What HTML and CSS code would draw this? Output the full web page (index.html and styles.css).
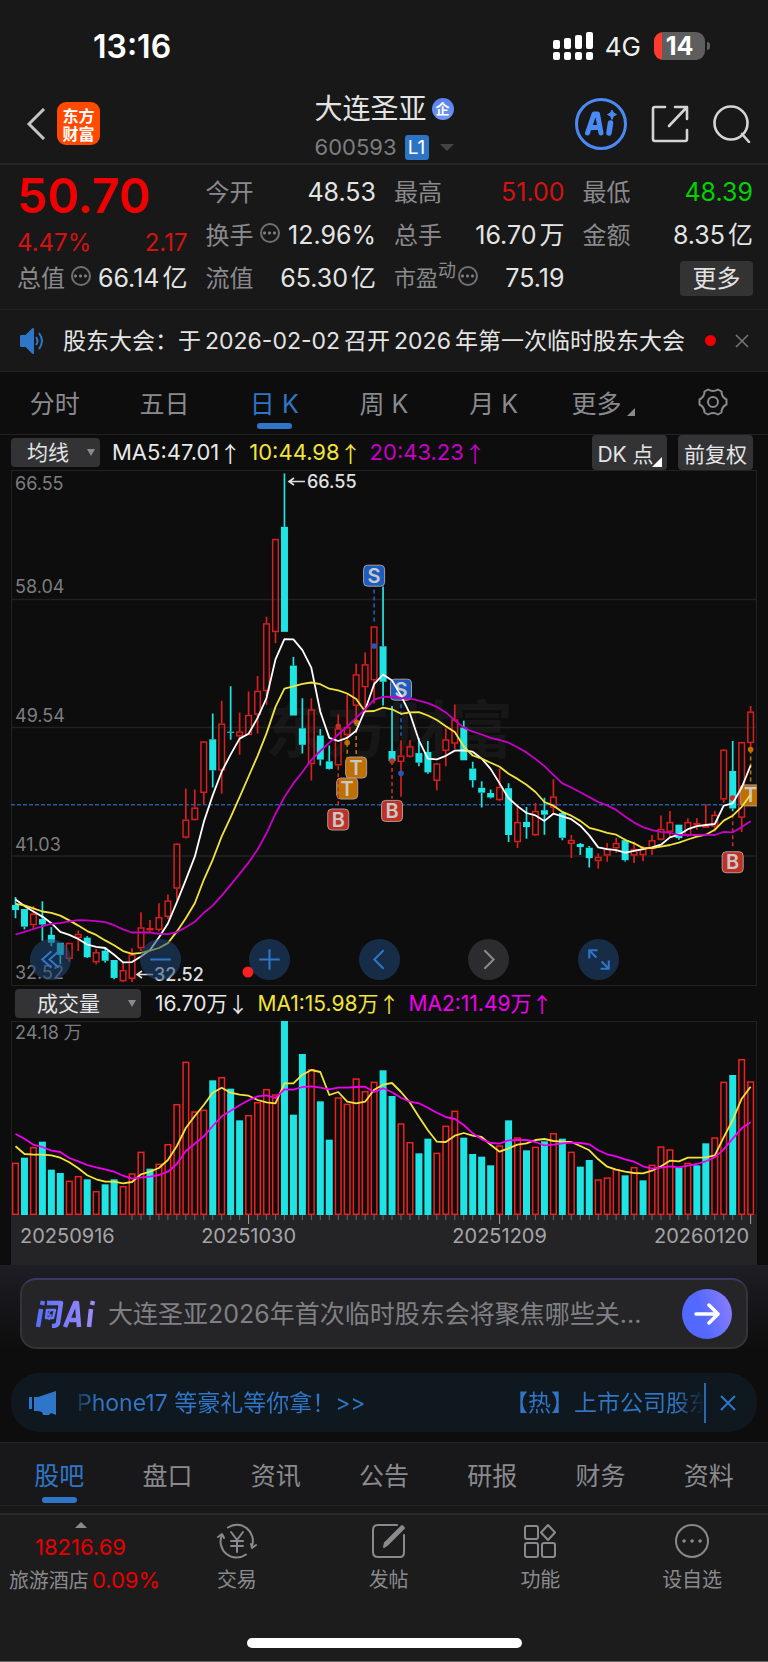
FILE: index.html
```html
<!DOCTYPE html>
<html lang="zh-CN">

<head>
    <meta charset="UTF-8">
    <meta name="viewport" content="width=device-width, initial-scale=1.0">
    <title>大连圣亚 600593</title>
    <link rel="stylesheet" href="styles.css">
</head>

<body>
    <div class="status-bar">
        <span class="clock">13:16</span>
        <div class="status-right">
            <svg class="signal" width="40" height="28" viewBox="0 0 40 28" fill="#fff">
                <rect x="0" y="8" width="7" height="9" rx="2" />
                <rect x="11" y="6" width="7" height="11" rx="2" />
                <rect x="22" y="3" width="7" height="14" rx="2" />
                <rect x="33" y="0" width="7" height="17" rx="2" />
                <rect x="0" y="20" width="7" height="8" rx="2" />
                <rect x="11" y="20" width="7" height="8" rx="2" />
                <rect x="22" y="20" width="7" height="8" rx="2" />
                <rect x="33" y="20" width="7" height="8" rx="2" />
            </svg>
            <span class="network">4G</span>
            <span class="battery">14</span>
        </div>
    </div>

    <header class="header">
        <div class="header-left">
            <button class="icon-btn" aria-label="返回">
                <svg width="20" height="32" viewBox="0 0 20 32" fill="none" stroke="#c4c4c4" stroke-width="3"><path d="M18 1 3 16l15 15" /></svg>
            </button>
            <div class="logo">东方<br>财富</div>
        </div>
        <div class="header-title">
            <h1>大连圣亚<span class="corp">企</span></h1>
            <div class="code">600593<span class="level">L1</span><i class="caret"></i></div>
        </div>
        <div class="header-right">
            <button class="icon-btn" aria-label="Ai">
                <svg width="52" height="52" viewBox="0 0 52 52" fill="none" stroke="#4a8af4">
                    <circle cx="26" cy="26" r="24.5" stroke-width="3" />
                    <path d="M12.5 35 19 16h3.500l3.500 19M16 29.500h8" stroke-width="5" stroke-linejoin="round" stroke-linecap="round" />
                    <path d="M35.500 25 34 35" stroke-width="5.500" stroke-linecap="round" />
                    <path d="M37 12l1.500 3 3 1.500-3 1.500-1.500 3.500-1.500-3.500-3-1.500 3-1.500z" fill="#4a8af4" />
                </svg>
            </button>
            <button class="icon-btn" aria-label="分享">
                <svg width="38" height="38" viewBox="0 0 38 38" fill="none" stroke="#d4d4d4" stroke-width="2.600" stroke-linecap="round" stroke-linejoin="round">
                    <path d="M14 2H4Q2 2 2 4v30q0 2 2 2h30q2 0 2-2V25M24 2h12v12M35 3 18 21" />
                </svg>
            </button>
            <button class="icon-btn" aria-label="搜索">
                <svg width="38" height="38" viewBox="0 0 38 38" fill="none" stroke="#d4d4d4" stroke-width="2.600" stroke-linecap="round">
                    <circle cx="18" cy="18" r="16.500" /><path d="M29 29l7 8" />
                </svg>
            </button>
        </div>
    </header>

    <section class="quote">
        <div class="quote-col">
            <div class="price">50.70</div>
            <div class="change"><span>4.47%</span><span>2.17</span></div>
            <div class="row"><span class="name">总值<i class="info"></i></span><b>66.14<em>亿</em></b></div>
        </div>
        <div class="quote-col">
            <div class="row"><span class="name">今开</span><b>48.53</b></div>
            <div class="row"><span class="name">换手<i class="info"></i></span><b>12.96%</b></div>
            <div class="row"><span class="name">流值</span><b>65.30<em>亿</em></b></div>
        </div>
        <div class="quote-col">
            <div class="row"><span class="name">最高</span><b class="up">51.00</b></div>
            <div class="row"><span class="name">总手</span><b>16.70<em>万</em></b></div>
            <div class="row"><span class="name small">市盈<sup>动</sup><i class="info"></i></span><b>75.19</b></div>
        </div>
        <div class="quote-col">
            <div class="row"><span class="name">最低</span><b class="down">48.39</b></div>
            <div class="row"><span class="name">金额</span><b>8.35<em>亿</em></b></div>
            <div class="row end"><button class="more">更多</button></div>
        </div>
    </section>

    <div class="notice">
        <svg width="24" height="28" viewBox="0 0 24 28" fill="none" stroke="#2f76c8" stroke-width="2">
            <path d="M1 9h5l7-7v24l-7-7H1z" fill="#2f76c8" stroke-linejoin="round" /><path d="M16 10q3 4 0 8M19 6q6 8 0 16" />
        </svg>
        <a href="#" class="notice-text">股东大会：于<span>2026-02-02</span>召开<span>2026</span>年第一次临时股东大会</a>
        <i class="dot"></i>
        <button class="icon-btn" aria-label="关闭">
            <svg width="14" height="14" viewBox="0 0 14 14" stroke="#77777b" stroke-width="1.500"><path d="M1 1l12 12M13 1 1 13" /></svg>
        </button>
    </div>

    <nav class="tabs period">
        <button>分时</button>
        <button>五日</button>
        <button class="active">日 K</button>
        <button>周 K</button>
        <button>月 K</button>
        <button>更多<i class="corner"></i></button>
        <button aria-label="设置">
            <svg width="30" height="28" viewBox="0 0 30 28" fill="none" stroke="#8a8a8e" stroke-width="2" stroke-linejoin="round">
                <path d="M10 1.500q5 3 10 0l3.500 2q0 5.500 5 8v5q-5 2.500-5 8l-3.500 2q-5-3-10 0l-3.500-2q0-5.500-5-8v-5q5-2.500 5-8z" /><circle cx="15" cy="14" r="5" />
            </svg>
        </button>
    </nav>

    <main class="chart">
        <div class="indicator">
            <span class="pick"><select aria-label="主图指标"><option>均线</option></select></span>
            <span class="ma w">MA5:47.01<i>↑</i></span>
            <span class="ma y">10:44.98<i>↑</i></span>
            <span class="ma m">20:43.23<i>↑</i></span>
            <span class="actions">
                <button>DK 点<i class="corner"></i></button>
                <button>前复权</button>
            </span>
        </div>
        <div class="plot">
            <svg id="kline" viewBox="0 0 746 516"></svg>
            <div class="controls">
                <button aria-label="最早"><svg viewBox="0 0 40 40"><path d="M21 12l-9 8 9 8M28 12l-9 8 9 8" /></svg></button>
                <button aria-label="缩小"><svg viewBox="0 0 40 40"><path d="M10 20h20" /></svg></button>
                <button aria-label="放大"><svg viewBox="0 0 40 40"><path d="M10 20h20M20 10v20" /></svg></button>
                <button aria-label="左移"><svg viewBox="0 0 40 40"><path d="M24 11l-9 9 9 9" /></svg></button>
                <button aria-label="右移" disabled><svg viewBox="0 0 40 40"><path d="M16 11l9 9-9 9" /></svg></button>
                <button aria-label="全屏"><svg viewBox="0 0 40 40"><path d="M11 19v-8h8M11 11l7 7M30 21v8h-8M30 29l-7-7" /></svg></button>
            </div>
        </div>
        <div class="indicator volume-head">
            <span class="pick wide"><select aria-label="副图指标"><option>成交量</option></select></span>
            <span class="ma w">16.70万<i>↓</i></span>
            <span class="ma y">MA1:15.98万<i>↑</i></span>
            <span class="ma m2">MA2:11.49万<i>↑</i></span>
        </div>
        <div class="plot">
            <svg id="volume" viewBox="0 0 746 244"></svg>
        </div>
    </main>

    <section class="ask">
        <form class="ask-box">
            <svg width="60" height="28" viewBox="0 0 60 28" fill="none" stroke-width="4.500" stroke-linejoin="round">
                <defs>
                    <linearGradient id="askFill" x1="0" y1="0" x2="60" y2="0" gradientUnits="userSpaceOnUse"><stop offset="0" stop-color="#5570ff" /><stop offset="1" stop-color="#a18cf8" /></linearGradient>
                </defs>
                <g stroke="url(#askFill)">
                    <path d="M7 1 6 5M5 9 2 27M11 3h14l-3 20q-.5 3-6 3" />
                    <path d="M11 10h8l-2 8h-7z" stroke-width="2.500" /><path d="M14 11l-2 4h3l-2 5" stroke-width="1.500" />
                    <path d="M29 27 39 3h2l2 24M34 20h9M55 9l-2 18" /><path d="M57 1l-1 4" />
                </g>
            </svg>
            <input type="text" aria-label="问Ai" placeholder="大连圣亚2026年首次临时股东会将聚焦哪些关...">
            <button type="button" class="send" aria-label="发送">
                <svg width="26" height="22" viewBox="0 0 26 22" fill="none" stroke="#fff" stroke-width="3.500" stroke-linecap="round" stroke-linejoin="round"><path d="M2 11h21M15 2l9 9-9 9" /></svg>
            </button>
        </form>
    </section>

    <div class="banner">
        <svg width="28" height="26" viewBox="0 0 28 26" fill="#2f76c8"><path d="M0 7h3v12H0zM5 7h4L27 1v24l-5-2-2 2h-6l-1-3-4-1H5z" /></svg>
        <div class="marquee"><a href="#">Phone17 等豪礼等你拿！&gt;&gt;</a><a href="#">【热】上市公司股东</a></div>
        <button class="icon-btn" aria-label="关闭">
            <svg width="16" height="16" viewBox="0 0 16 16" stroke="#2f76c8" stroke-width="2"><path d="M1 1l14 14M15 1 1 15" /></svg>
        </button>
    </div>

    <nav class="tabs sections">
        <button class="active">股吧</button>
        <button>盘口</button>
        <button>资讯</button>
        <button>公告</button>
        <button>研报</button>
        <button>财务</button>
        <button>资料</button>
    </nav>

    <footer class="bottom">
        <div class="bottom-nav">
            <a href="#" class="index">
                <i class="tri"></i>
                <strong>18216.69</strong>
                <span>旅游酒店<b>0.09%</b></span>
            </a>
            <a href="#">
                <svg width="40" height="36" viewBox="0 0 40 36">
                    <path d="M11 4.500A16 16 0 0 1 35 23M29 31.500A16 16 0 0 1 5 12" /><path d="M1 14l4-3 2 4M39 22l-4 3-1-4" /><path d="M14 9l6 8 6-8M20 17v12M14 18h12M14 23h12" />
                </svg>
                交易
            </a>
            <a href="#">
                <svg width="40" height="36" viewBox="0 0 40 36">
                    <path d="M28 2H9Q4 2 4 7v22q0 5 5 5h22q4 0 4-5V12" /><path d="M15 24l1-4L33 3l2 2-17 17z" fill="#8a8a8e" />
                </svg>
                发帖
            </a>
            <a href="#">
                <svg width="40" height="36" viewBox="0 0 40 36">
                    <rect x="5" y="3" width="13" height="13" rx="2" /><rect x="5" y="20" width="13" height="14" rx="2" /><rect x="22" y="20" width="13" height="14" rx="2" /><path d="M28 2l7 7.500-7 7.500-7-7.500z" />
                </svg>
                功能
            </a>
            <a href="#">
                <svg width="40" height="36" viewBox="0 0 40 36">
                    <circle cx="20" cy="18" r="16" /><path d="M12 18h.1M20 18h.1M28 18h.1" stroke-width="3.500" />
                </svg>
                设自选
            </a>
        </div>
        <div class="home-bar"></div>
    </footer>

    <script src="script.js"></script>
</body>

</html>
```
FILE: styles.css
```css
* {
    box-sizing: border-box;
}

body {
    margin: 0;
    background: #0d0d0d;
    color: #e4e4e4;
    font-family: Inter, "Noto Sans CJK SC", sans-serif;
    font-size: 22px;
}

button {
    padding: 0;
    border: 0;
    background: none;
    color: inherit;
    font: inherit;
}

a {
    color: inherit;
    text-decoration: none;
}

i,
em {
    font-style: normal;
}

svg {
    display: block;
    flex: none;
}

.status-bar {
    display: flex;
    justify-content: space-between;
    align-items: center;
    height: 80px;
    padding: 12px 58px 0 93px;
    background: #181818;
    color: #fff;
}

.clock {
    font-size: 32px;
    font-weight: 600;
}

.status-right {
    display: flex;
    align-items: center;
}

.network {
    margin: 0 13px 0 12px;
    font-size: 26px;
    color: #eee;
}

.battery {
    position: relative;
    width: 51px;
    height: 28px;
    margin-right: 5px;
    border-radius: 9px;
    background: linear-gradient(90deg, #ff3b30 8px, #5e5e5e 8px);
    font-size: 25px;
    font-weight: 700;
    line-height: 28px;
    text-align: center;
}

.battery::after {
    content: '';
    position: absolute;
    right: -5px;
    top: 10px;
    width: 3px;
    height: 8px;
    border-radius: 0 3px 3px 0;
    background: #5e5e5e;
}

.header {
    display: grid;
    grid-template-columns: 1fr auto 1fr;
    align-items: center;
    height: 85px;
    padding: 4px 17px 0;
    border-bottom: 2px solid #262626;
    background: #181818;
}

.header-left,
.header-right {
    display: flex;
    align-items: center;
}

.header-left {
    gap: 11px;
    padding-left: 9px;
}

.header-right {
    justify-content: flex-end;
    gap: 24px;
}

.logo {
    width: 43px;
    height: 43px;
    padding-top: 4px;
    border-radius: 9px;
    background: #ff4a00;
    color: #fff;
    font-family: "Noto Sans CJK SC", sans-serif;
    font-size: 16px;
    font-weight: 700;
    line-height: 18px;
    text-align: center;
}

.header-title {
    padding-top: 5px;
}

.header-title h1 {
    display: flex;
    align-items: center;
    gap: 5px;
    margin: 0 0 8px;
    font-size: 28px;
    font-weight: 400;
    line-height: 34px;
}

.corp {
    width: 22px;
    height: 22px;
    border-radius: 50%;
    background: linear-gradient(#5580ee, #7098f2);
    color: #fff;
    font-size: 14px;
    font-weight: 700;
    line-height: 21px;
    text-align: center;
}

.code {
    display: flex;
    align-items: center;
    color: #7d7d81;
    font-size: 22px;
    line-height: 26px;
}

.level {
    width: 24px;
    height: 25px;
    margin: 0 11px 0 8px;
    border-radius: 3px;
    background: #2d74c4;
    color: #fff;
    font-size: 19px;
    line-height: 25px;
    text-align: center;
}

.caret {
    border: 7px solid transparent;
    border-top-color: #444;
    border-bottom: 0;
}

.quote {
    display: grid;
    grid-template-columns: repeat(4, 1fr);
    gap: 18px;
    height: 145px;
    padding: 6px 15px 0 17px;
    border-bottom: 1px solid #222;
    background: #181818;
}

.price {
    color: #f00000;
    font-size: 48px;
    font-weight: 600;
    line-height: 50px;
}

.change {
    display: flex;
    justify-content: space-between;
    padding-top: 8px;
    color: #d41212;
    font-size: 24px;
    line-height: 28px;
}

.row {
    display: flex;
    justify-content: space-between;
    align-items: center;
    height: 43px;
    font-size: 24px;
    line-height: 43px;
    white-space: nowrap;
}

.row.end {
    justify-content: flex-end;
}

.name {
    display: flex;
    align-items: center;
    color: #8a8a8e;
}

.name.small {
    font-size: 22px;
}

.row sup {
    font-size: 18px;
    line-height: 28px;
    align-self: flex-start;
}

.row b {
    font-size: 25px;
    font-weight: 400;
}

.row em {
    margin-left: 3px;
}

.row .up {
    color: #d41212;
}

.row .down {
    color: #00d400;
}

.info {
    width: 20px;
    height: 20px;
    margin: -6px 0 0 6px;
    border: 2px solid #707074;
    border-radius: 50%;
    background: radial-gradient(circle, #808084 1px, transparent 2px) 0 0 / 5px 16px repeat-x;
}

.small .info {
    margin-left: 2px;
}

.more {
    width: 73px;
    height: 35px;
    border-radius: 4px;
    background: #333;
    line-height: 34px;
}

.notice {
    display: flex;
    align-items: center;
    height: 62px;
    padding: 0 19px 0 20px;
    border-bottom: 1px solid #222;
    background: #181818;
}

.notice-text {
    flex: 1;
    padding-bottom: 3px;
    margin-left: 19px;
    font-size: 23px;
    white-space: nowrap;
}

.notice-text span {
    margin: 0 4px;
}

.dot {
    width: 11px;
    height: 11px;
    margin-right: 19px;
    border-radius: 50%;
    background: #f00000;
}

.tabs {
    display: grid;
    grid-template-columns: repeat(7, 1fr);
    height: 63px;
    color: #8a8a8e;
    font-size: 25px;
}

.tabs button {
    position: relative;
    display: flex;
    align-items: center;
    justify-content: center;
}

.tabs .active {
    color: #2f76c8;
}

.tabs .active::after {
    content: '';
    position: absolute;
    bottom: 2px;
    width: 35px;
    height: 6px;
    border-radius: 3px;
    background: #2f76c8;
}

.period {
    padding-bottom: 3px;
    border-bottom: 1px solid #222;
}

.corner {
    border: 4px solid transparent;
    border-right-color: currentColor;
    border-bottom-color: currentColor;
}

.period .corner {
    margin: 20px 0 0 6px;
}

.chart {
    padding: 0 11px;
}

.indicator {
    display: flex;
    align-items: center;
    height: 35px;
    font-size: 21px;
    white-space: nowrap;
}

.pick {
    position: relative;
    width: 89px;
    margin-right: 12px;
}

.pick select {
    width: 100%;
    height: 29px;
    padding: 0 0 0 16px;
    border: 0;
    border-radius: 4px;
    appearance: none;
    background: #333336;
    color: #e4e4e4;
    font: inherit;
}

.pick::after {
    content: '';
    position: absolute;
    right: 5px;
    top: 11px;
    border: 4px solid transparent;
    border-top: 7px solid #8a8a8e;
    border-bottom: 0;
}

.pick.wide {
    width: 126px;
    margin: 0 14px 0 4px;
}

.wide select {
    padding-left: 22px;
}

.ma {
    display: flex;
    align-items: center;
    margin-right: 15px;
    font-size: 22px;
    line-height: 35px;
}

.ma i {
    width: 15px;
    font-family: "Noto Sans CJK SC", sans-serif;
    text-align: center;
}

.volume-head .ma {
    font-size: 21px;
}

.w {
    color: #e8e8e8;
}

.y {
    color: #f2e43c;
}

.m {
    color: #c800c8;
}

.m2 {
    color: #f000f0;
}

.actions {
    display: flex;
    gap: 11px;
    margin: 0 4px 0 auto;
}

.actions button {
    position: relative;
    width: 75px;
    height: 35px;
    border-radius: 4px;
    background: #333336;
}

.actions .corner {
    position: absolute;
    right: 5px;
    bottom: 3px;
    border-width: 5px;
    color: #fff;
}

.actions button:first-child {
    padding-right: 8px;
}

.plot {
    position: relative;
}

.plot > svg {
    width: 100%;
    height: auto;
}

.controls {
    position: absolute;
    left: 19px;
    right: 138px;
    bottom: 6px;
    display: flex;
    justify-content: space-between;
}

.controls button {
    width: 41px;
    height: 41px;
    border-radius: 50%;
    background: rgba(32, 72, 120, 0.55);
}

.controls svg {
    fill: none;
    stroke: #2f76c8;
    stroke-width: 2;
}

.controls button:disabled {
    background: #2c2c2e;
}

.controls button:disabled svg {
    stroke: #8a8a8e;
}

.ask {
    padding: 13px 20px 24px;
    background: linear-gradient(#1d1d24, #0d0d0d 80%);
}

.ask-box {
    display: flex;
    align-items: center;
    height: 71px;
    padding: 0 14px;
    border: 2px solid #343438;
    border-top-color: #39386a;
    border-radius: 16px;
    background: #252527;
}

.ask-box input {
    flex: 1;
    min-width: 0;
    margin: 0 12px;
    padding: 0;
    border: 0;
    outline: 0;
    background: none;
    color: #e4e4e4;
    font: inherit;
    font-size: 25px;
}

.ask-box input::placeholder {
    color: #808084;
}

.send {
    display: flex;
    align-items: center;
    justify-content: center;
    width: 50px;
    height: 50px;
    border-radius: 50%;
    background: linear-gradient(75deg, #5268ff 40%, #9080fa);
}

.banner {
    display: flex;
    align-items: center;
    height: 59px;
    margin: 0 11px 10px;
    padding: 0 21px 0 18px;
    border-radius: 28px;
    background: #10181f;
    color: #2f76c8;
    font-size: 23px;
}

.marquee {
    flex: 1;
    display: flex;
    justify-content: space-between;
    margin: 0 14px 0 20px;
    border-right: 2px solid #2a67ae;
    line-height: 40px;
    white-space: nowrap;
    overflow: hidden;
}

.marquee a {
    background: linear-gradient(90deg, #14304c, #2f76c8 20px);
    background-clip: text;
    color: transparent;
}

.marquee a + a {
    margin-right: -8px;
    background-image: linear-gradient(270deg, #10181f 8px, #2f76c8 36px);
}

.sections {
    height: 71px;
    padding: 0 5px 8px;
    border-top: 1px solid #262626;
    background: linear-gradient(#222, #222) 0 62px / 100% 1px no-repeat #18181a;
}

.bottom {
    height: 149px;
    border-top: 2px solid #2a2a2a;
    border-bottom: 1px solid #666;
    background: #1c1c1c;
}

.bottom-nav {
    display: grid;
    grid-template-columns: 161px repeat(4, 1fr);
    height: 82px;
    margin-bottom: 41px;
    color: #8a8a8e;
    font-size: 20px;
}

.bottom-nav a {
    display: flex;
    flex-direction: column;
    align-items: center;
    gap: 7px;
    padding-top: 8px;
    line-height: 28px;
}

.bottom-nav svg {
    fill: none;
    stroke: #8a8a8e;
    stroke-width: 2;
    stroke-linecap: round;
    stroke-linejoin: round;
}

.bottom-nav .index {
    gap: 5px;
    padding-top: 7px;
    white-space: nowrap;
}

.index strong,
.index b {
    color: #e80000;
    font-size: 22px;
    font-weight: 400;
}

.index span {
    padding-left: 8px;
}

.index b {
    margin-left: 3px;
}

.tri {
    border: 6px solid transparent;
    border-bottom-color: #8a8a8e;
    border-top: 0;
}

.home-bar {
    width: 275px;
    max-width: 50%;
    height: 10px;
    margin: 0 auto;
    border-radius: 5px;
    background: #fff;
}

#kline text,
#volume text {
    font-family: Inter, "Noto Sans CJK SC", sans-serif;
    font-size: 18px;
    fill: #7d7d81;
}

#kline .note {
    fill: #e0e0e0;
    font-weight: 500;
}

#kline .flag {
    fill: #c8c8c8;
    font-size: 20px;
    font-weight: 600;
    text-anchor: middle;
}

#kline .watermark {
    fill: #171717;
    font-size: 62px;
    font-weight: 700;
}

#volume .date {
    fill: #a4a4a8;
    font-size: 20px;
}
```
FILE: script.js
```javascript
const RED = '#d81e1e';
const CYAN = '#1fe4e4';
const STEP = 8.965;
const FIRST = 4.5;

// high, body top, body bottom, low, 1 = up day. Rows count down from the top of the price plot.
const candles = [
    [1270, 1293, 1308, 1332, 0], [1305, 1305, 1356, 1364, 0], [1296, 1318, 1352, 1364, 1], [1282, 1334, 1350, 1397, 0],
    [1357, 1380, 1403, 1413, 0], [1403, 1403, 1438, 1465, 0], [1403, 1403, 1450, 1458, 1], [1367, 1377, 1389, 1427, 1],
    [1384, 1388, 1445, 1447, 0], [1420, 1430, 1460, 1466, 1], [1420, 1426, 1455, 1460, 0], [1453, 1453, 1505, 1509, 0],
    [1462, 1482, 1515, 1517, 1], [1419, 1437, 1508, 1517, 1], [1314, 1358, 1419, 1427, 1], [1337, 1360, 1367, 1372, 1],
    [1288, 1328, 1366, 1370, 1], [1263, 1280, 1328, 1334, 1], [1113, 1115, 1246, 1280, 1], [955, 1045, 1098, 1100, 1],
    [958, 1010, 1047, 1048, 1], [817, 818, 968, 1002, 1], [737, 812, 902, 952, 0], [700, 766, 903, 970, 1],
    [658, 790, 793, 813, 0], [734, 789, 804, 857, 1], [673, 741, 800, 800, 1], [628, 671, 741, 795, 1],
    [456, 475, 672, 712, 1], [230, 230, 501, 533, 1], [40, 195, 500, 500, 0], [573, 598, 743, 743, 0],
    [693, 780, 828, 853, 0], [693, 725, 884, 932, 1], [782, 801, 871, 888, 0], [830, 876, 898, 900, 0],
    [740, 780, 888, 890, 1], [682, 776, 800, 820, 1], [593, 623, 715, 760, 1], [559, 594, 661, 735, 1],
    [483, 484, 641, 708, 1], [368, 542, 645, 714, 0], [715, 846, 875, 875, 0], [815, 859, 878, 979, 1],
    [814, 832, 863, 865, 1], [808, 852, 880, 890, 0], [817, 849, 908, 912, 0], [880, 882, 933, 960, 1],
    [780, 812, 846, 890, 1], [711, 754, 825, 840, 1], [758, 778, 873, 873, 0], [877, 897, 931, 952, 0],
    [934, 953, 967, 1010, 0], [958, 968, 981, 984, 0], [897, 950, 989, 992, 1], [940, 954, 1090, 1110, 0],
    [1003, 1052, 1111, 1128, 1], [1009, 1052, 1067, 1101, 0], [997, 1020, 1091, 1092, 1], [982, 1018, 1031, 1089, 0],
    [928, 978, 1011, 1030, 1], [1024, 1026, 1098, 1105, 0], [1090, 1104, 1116, 1157, 1], [1113, 1116, 1125, 1148, 0],
    [1122, 1127, 1157, 1184, 0], [1144, 1153, 1166, 1188, 1], [1113, 1130, 1150, 1168, 1], [1099, 1113, 1129, 1142, 1],
    [1101, 1105, 1163, 1167, 0], [1109, 1130, 1150, 1171, 1], [1122, 1130, 1149, 1166, 1], [1090, 1105, 1131, 1148, 1],
    [1033, 1072, 1104, 1106, 1], [1020, 1052, 1081, 1095, 1], [1060, 1060, 1099, 1104, 0], [1041, 1052, 1092, 1095, 1],
    [1041, 1055, 1061, 1075, 1], [1001, 1062, 1066, 1067, 1], [1020, 1031, 1066, 1080, 1], [840, 842, 987, 996, 1],
    [817, 904, 1013, 1021, 0], [819, 820, 1040, 1081, 1], [715, 731, 823, 837, 1]
];

const ma5 = [1277, 1296, 1312, 1327, 1346, 1371, 1380, 1392, 1408, 1415, 1418, 1438, 1460, 1459, 1443, 1424, 1388, 1347, 1285, 1220, 1153, 1052, 975, 906, 856, 810, 796, 750, 692, 580, 521, 522, 553, 604, 732, 808, 817, 808, 787, 727, 652, 624, 641, 685, 738, 815, 868, 870, 860, 845, 844, 848, 868, 898, 940, 983, 1006, 1026, 1033, 1049, 1028, 1036, 1044, 1063, 1091, 1126, 1131, 1134, 1141, 1136, 1131, 1126, 1118, 1097, 1089, 1073, 1064, 1061, 1058, 1005, 998, 952, 888];
const ma10 = [1290, 1294, 1303, 1312, 1316, 1324, 1338, 1353, 1369, 1380, 1396, 1410, 1427, 1435, 1432, 1426, 1418, 1404, 1370, 1332, 1288, 1220, 1162, 1094, 1038, 980, 920, 860, 795, 718, 665, 658, 651, 647, 652, 665, 670, 679, 695, 731, 730, 720, 725, 738, 734, 733, 743, 756, 774, 791, 833, 859, 868, 880, 892, 912, 927, 944, 965, 994, 1005, 1023, 1034, 1049, 1069, 1076, 1084, 1089, 1104, 1114, 1128, 1128, 1124, 1119, 1112, 1103, 1095, 1089, 1075, 1048, 1034, 1008, 973];
const ma20 = [1379, 1371, 1363, 1355, 1348, 1346, 1341, 1337, 1338, 1340, 1343, 1352, 1364, 1373, 1373, 1373, 1377, 1378, 1372, 1358, 1342, 1316, 1295, 1266, 1235, 1203, 1170, 1132, 1085, 1028, 980, 940, 907, 872, 846, 822, 798, 775, 750, 725, 697, 689, 688, 692, 694, 700, 707, 718, 734, 757, 778, 790, 798, 808, 814, 822, 835, 850, 869, 890, 915, 940, 952, 966, 980, 994, 1004, 1017, 1036, 1054, 1067, 1076, 1081, 1083, 1090, 1090, 1090, 1089, 1090, 1081, 1082, 1067, 1050];

const volumes = [550, 535, 503, 487, 571, 581, 604, 590, 600, 635, 615, 600, 620, 582, 517, 568, 553, 494, 374, 247, 396, 391, 303, 293, 328, 423, 407, 368, 329, 345, 125, 406, 224, 269, 366, 481, 354, 373, 297, 335, 307, 273, 350, 432, 488, 522, 478, 520, 439, 394, 475, 524, 532, 558, 498, 423, 474, 513, 502, 486, 461, 478, 517, 562, 542, 600, 594, 569, 588, 563, 603, 556, 501, 510, 565, 550, 558, 492, 474, 307, 287, 239, 306];
const volMa1 = [501, 524, 526, 526, 528, 535, 549, 567, 588, 600, 607, 607, 612, 608, 585, 577, 566, 542, 500, 446, 410, 377, 340, 325, 340, 346, 349, 362, 369, 372, 312, 312, 286, 272, 278, 347, 338, 367, 372, 367, 331, 316, 311, 338, 370, 412, 453, 487, 488, 469, 461, 469, 473, 496, 517, 507, 496, 492, 482, 479, 485, 487, 488, 500, 513, 540, 562, 571, 577, 581, 582, 574, 561, 544, 546, 535, 535, 534, 528, 474, 422, 358, 322];
const volMa2 = [464, 478, 496, 503, 514, 518, 536, 546, 557, 564, 570, 577, 589, 598, 594, 592, 587, 577, 554, 515, 493, 471, 440, 411, 394, 378, 363, 351, 348, 356, 330, 331, 323, 321, 325, 330, 325, 325, 323, 322, 338, 327, 339, 355, 367, 372, 385, 400, 413, 419, 437, 462, 480, 491, 493, 483, 482, 482, 488, 498, 496, 492, 490, 491, 495, 513, 525, 531, 540, 547, 561, 568, 565, 561, 564, 559, 554, 546, 534, 510, 478, 447, 429];

// days whose volume colour is the opposite of the candle colour
const swapped = [0, 15, 25, 70, 76, 77];

// letter, candle index, flag row, fill dot row, stem start, stem end, colour
const flags = [
    ['S', 40, 337, 541, 377, 470, '#1c5cc0'],
    ['S', 43, 668, 911, 710, 802, '#1c5cc0'],
    ['T', 38, 894, 762, 762, 860, '#c07000'],
    ['T', 37, 955, 822, 822, 920, '#c07000'],
    ['B', 36, 1045, 774, 890, 1005, '#c03024'],
    ['B', 42, 1020, 875, 875, 985, '#c03024'],
    ['B', 80, 1169, 983, 1030, 1132, '#c03024'],
    ['T', 82, 975, 842, 842, 936, '#c07000']
];

const x = i => FIRST + i * STEP;
const py = v => (v - 30) / 2.904;
const vy = v => (v - 125) / 3;

function line(values, scale, color) {
    const points = values.map((v, i) => `${x(i).toFixed(1)},${scale(v).toFixed(1)}`).join(' ');
    return `<polyline points="${points}" fill="none" stroke="${color}" stroke-width="1.8" stroke-linejoin="round"/>`;
}

function drawKline() {
    let out = '<rect x=".5" y=".5" width="745" height="515" fill="none" stroke="#222"/>';
    out += '<text class="watermark" x="254" y="283">东方财富</text>';
    [406, 778, 1151].forEach(v => {
        out += `<path d="M0 ${py(v)}H746" stroke="#222" stroke-width="1.500"/>`;
    });
    out += `<path d="M0 ${py(1002)}H746" stroke="#245a9c" stroke-width="1.500" stroke-dasharray="4 2"/>`;

    [['66.55', 20], ['58.04', 123], ['49.54', 252], ['41.03', 381], ['32.52', 509]].forEach(([t, y]) => {
        out += `<text x="4" y="${y}">${t}</text>`;
    });

    candles.forEach(([high, top, bottom, low, up], i) => {
        const c = x(i);
        const color = up ? RED : CYAN;
        out += `<path d="M${c} ${py(high)}V${py(top)}M${c} ${py(bottom)}V${py(low)}" stroke="${color}" stroke-width="1.700"/>`;
        if (up) {
            out += `<rect x="${c - 2.8}" y="${py(top) + 0.7}" width="5.6" height="${Math.max(1, py(bottom) - py(top) - 1.4)}" fill="none" stroke="${color}" stroke-width="1.500"/>`;
        } else {
            out += `<rect x="${c - 3.5}" y="${py(top)}" width="7" height="${Math.max(1, py(bottom) - py(top))}" fill="${color}"/>`;
        }
    });

    flags.forEach(([t, i, row, dot, from, to, color]) => {
        const c = x(i);
        const y = py(row);
        out += `<path d="M${c} ${py(from)}V${py(to)}" stroke="${color}" stroke-width="1.600" stroke-dasharray="4 3"/>`;
        out += `<circle cx="${c}" cy="${py(dot)}" r="2.800" fill="${color}"/>`;
        out += `<rect x="${c - 10.5}" y="${y - 10.5}" width="21" height="21" rx="4" fill="${color}" stroke="#a89c98"/>`;
        out += `<text class="flag" x="${c}" y="${y + 7}">${t}</text>`;
    });

    out += line(ma5, py, '#fff') + line(ma10, py, '#f2e43c') + line(ma20, py, '#c800c8');

    out += `<path d="M294 11.500H278M283 8l-5 3.500 5 3.500" fill="none" stroke="#e0e0e0" stroke-width="1.600"/><text class="note" x="296" y="18">66.55</text>`;
    out += `<path d="M142 504.500H126M131 501l-5 3.500 5 3.500" fill="none" stroke="#e0e0e0" stroke-width="1.600"/><text class="note" x="143" y="511">32.52</text>`;
    out += '<circle cx="237" cy="502" r="5.500" fill="#f82020"/>';
    document.getElementById('kline').innerHTML = out;
}

function drawVolume() {
    let out = '<rect x=".5" y=".5" width="745" height="193" fill="none" stroke="#222"/>';
    out += '<rect y="194" width="746" height="50" fill="#242426"/>';
    volumes.forEach((v, i) => {
        const c = x(i);
        const up = candles[i][4] === 1;
        if (up !== swapped.includes(i)) {
            out += `<rect x="${c - 2.8}" y="${vy(v) + 0.7}" width="5.6" height="${192.6 - vy(v)}" fill="#0d0d0d" stroke="#f02020" stroke-width="1.500"/>`;
        } else {
            out += `<rect x="${c - 3.5}" y="${vy(v)}" width="7" height="${194 - vy(v)}" fill="${CYAN}"/>`;
        }
        if (i > 12) {
            const major = i === 26 || i === 54 || i === 82;
            out += `<path d="M${c} 194v${major ? 9 : 5}" stroke="${major ? '#a0a0a0' : '#66666a'}"/>`;
        }
    });
    out += line(volMa1, vy, '#f2e43c') + line(volMa2, vy, '#f000f0');
    out += '<text x="4" y="18">24.18 万</text>';
    [['20250916', 9, 'start'], ['20251030', x(26), 'middle'], ['20251209', x(54), 'middle'], ['20260120', 738, 'end']].forEach(([t, left, anchor]) => {
        out += `<text class="date" x="${left}" y="222" text-anchor="${anchor}">${t}</text>`;
    });
    document.getElementById('volume').innerHTML = out;
}

drawKline();
drawVolume();
```
